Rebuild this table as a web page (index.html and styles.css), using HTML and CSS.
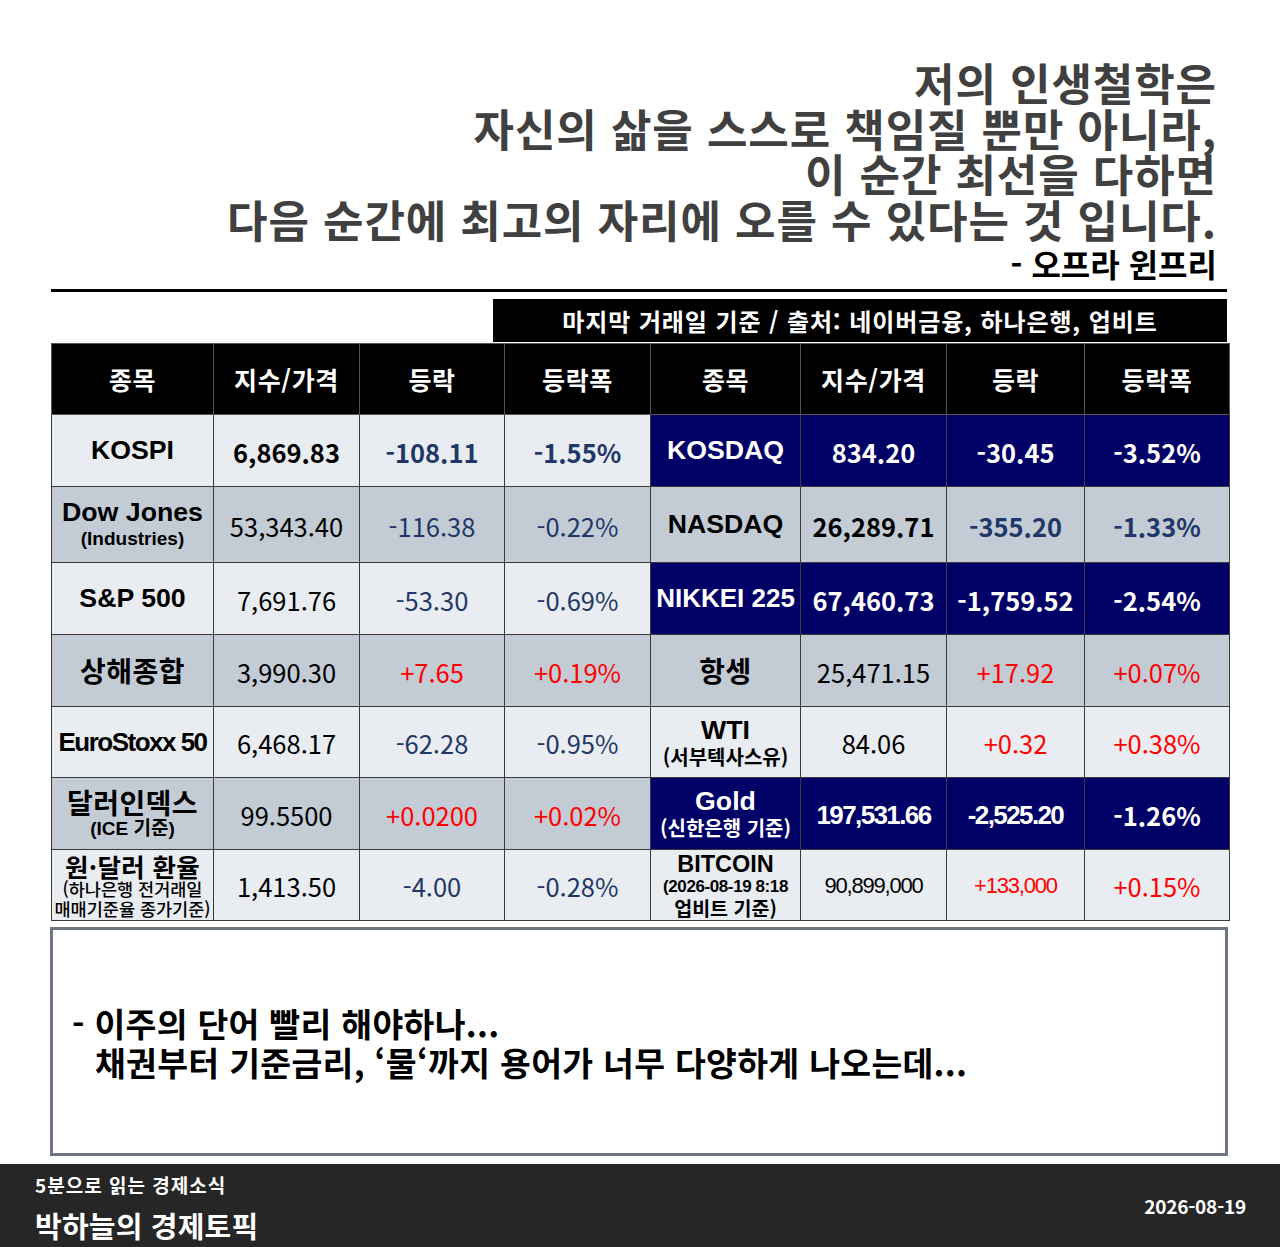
FILE: index.html
```html
<!DOCTYPE html>
<html lang="ko">
<head>
<meta charset="utf-8">
<title>박하늘의 경제토픽</title>
<link rel="stylesheet" href="styles.css">
</head>
<body>
<div class="page">
  <section class="quote">
    <p class="quote-text">저의 인생철학은<br>자신의 삶을 스스로 책임질 뿐만 아니라,<br>이 순간 최선을 다하면<br>다음 순간에 최고의 자리에 오를 수 있다는 것 입니다.</p>
    <p class="quote-author">- 오프라 윈프리</p>
  </section>
  <div class="rule"></div>
  <div class="source-row"><div class="source">마지막 거래일 기준 / 출처: 네이버금융, 하나은행, 업비트</div></div>
  <table class="market">
    <colgroup>
      <col class="c1"><col class="c2"><col class="c3"><col class="c4">
      <col class="c5"><col class="c6"><col class="c7"><col class="c8">
    </colgroup>
    <thead>
      <tr class="h-row">
        <th>종목</th><th>지수/가격</th><th>등락</th><th>등락폭</th>
        <th>종목</th><th>지수/가격</th><th>등락</th><th>등락폭</th>
      </tr>
    </thead>
    <tbody>
      <tr class="light r1">
        <td class="name">KOSPI</td>
        <td class="val b">6,869.83</td>
        <td class="val b dn">-108.11</td>
        <td class="val b dn">-1.55%</td>
        <td class="name navy">KOSDAQ</td>
        <td class="val b navy">834.20</td>
        <td class="val b navy">-30.45</td>
        <td class="val b navy">-3.52%</td>
      </tr>
      <tr class="grey r2">
        <td class="name"><span class="main">Dow Jones</span><span class="sub">(Industries)</span></td>
        <td class="val">53,343.40</td>
        <td class="val dn">-116.38</td>
        <td class="val dn">-0.22%</td>
        <td class="name">NASDAQ</td>
        <td class="val b">26,289.71</td>
        <td class="val b dn">-355.20</td>
        <td class="val b dn">-1.33%</td>
      </tr>
      <tr class="light r3">
        <td class="name">S&amp;P 500</td>
        <td class="val">7,691.76</td>
        <td class="val dn">-53.30</td>
        <td class="val dn">-0.69%</td>
        <td class="name navy tight">NIKKEI 225</td>
        <td class="val b navy">67,460.73</td>
        <td class="val b navy">-1,759.52</td>
        <td class="val b navy">-2.54%</td>
      </tr>
      <tr class="grey r4">
        <td class="name ko">상해종합</td>
        <td class="val">3,990.30</td>
        <td class="val up">+7.65</td>
        <td class="val up">+0.19%</td>
        <td class="name ko">항셍</td>
        <td class="val">25,471.15</td>
        <td class="val up">+17.92</td>
        <td class="val up">+0.07%</td>
      </tr>
      <tr class="light r5">
        <td class="name narrow">EuroStoxx 50</td>
        <td class="val">6,468.17</td>
        <td class="val dn">-62.28</td>
        <td class="val dn">-0.95%</td>
        <td class="name"><span class="main">WTI</span><span class="sub ko-sub">(서부텍사스유)</span></td>
        <td class="val">84.06</td>
        <td class="val up">+0.32</td>
        <td class="val up">+0.38%</td>
      </tr>
      <tr class="grey r6">
        <td class="name"><span class="main ko dx">달러인덱스</span><span class="sub">(ICE 기준)</span></td>
        <td class="val">99.5500</td>
        <td class="val up">+0.0200</td>
        <td class="val up">+0.02%</td>
        <td class="name navy"><span class="main">Gold</span><span class="sub gold-sub">(신한은행 기준)</span></td>
        <td class="val navy nb">197,531.66</td>
        <td class="val navy nb">-2,525.20</td>
        <td class="val b navy">-1.26%</td>
      </tr>
      <tr class="light r7">
        <td class="name"><span class="main ko fx">원·달러 환율</span><span class="tiny">(하나은행 전거래일</span><span class="tiny">매매기준율 종가기준)</span></td>
        <td class="val">1,413.50</td>
        <td class="val dn">-4.00</td>
        <td class="val dn">-0.28%</td>
        <td class="name"><span class="main btc">BITCOIN</span><span class="tiny b2">(2026-08-19 8:18</span><span class="sub b3">업비트 기준)</span></td>
        <td class="val nr">90,899,000</td>
        <td class="val up nr">+133,000</td>
        <td class="val up">+0.15%</td>
      </tr>
    </tbody>
  </table>
  <section class="note">
    <div class="note-text">
      <p class="note-line">- 이주의 단어 빨리 해야하나...</p>
      <p class="note-line indent">채권부터 기준금리, ‘물‘까지 용어가 너무 다양하게 나오는데...</p>
    </div>
  </section>
  <footer class="footer">
    <div class="brand">
      <div class="brand-sub">5분으로 읽는 경제소식</div>
      <div class="brand-main">박하늘의 경제토픽</div>
    </div>
    <div class="date">2026-08-19</div>
  </footer>
</div>
</body>
</html>
```
FILE: styles.css
```css
* { box-sizing: border-box; }
html, body { margin: 0; padding: 0; background: #ffffff; }
body { font-family: "Noto Sans CJK KR", "Noto Sans", sans-serif; color: #000; }
.page { width: 1280px; height: 1247px; display: flex; flex-direction: column; }

.quote { padding: 60px 63px 0 0; text-align: right; }
.quote p { margin: 0; }
.quote-text { font-size: 44px; line-height: 45.5px; font-weight: 700; color: #404040; letter-spacing: 0.9px; }
.quote-author { font-size: 32px; line-height: 40px; font-weight: 700; color: #000; margin-top: 1px !important; }

.rule { margin: 6px 53px 0 51px; height: 3px; background: #000; }

.source-row { display: flex; justify-content: flex-end; padding: 7px 53px 0 0; }
.source { width: 734px; height: 43px; background: #000; color: #fff; font-size: 24px; font-weight: 700;
  display: flex; align-items: center; justify-content: center; letter-spacing: 0.9px; }

.market { margin: 1px 0 0 51px; width: 1178px; border-collapse: collapse; table-layout: fixed; }
.c1 { width: 162px; } .c2 { width: 146px; } .c3 { width: 145px; } .c4 { width: 146px; }
.c5 { width: 150px; } .c6 { width: 146px; } .c7 { width: 138px; } .c8 { width: 145px; }
.market th, .market td { border: 1px solid #3a3a3a; padding: 0; text-align: center; vertical-align: middle; }
.market th { background: #000; color: #fff; font-size: 25px; font-weight: 700; height: 71px; border-color: #555; letter-spacing: 0.6px; }
.h-row { height: 71px; }
.r1 { height: 72px; } .r2 { height: 76px; } .r3 { height: 72px; } .r4 { height: 72px; }
.r5 { height: 71px; } .r6 { height: 72px; } .r7 { height: 71px; }
.light td { background: #e9edf1; }
.grey td { background: #c3cbd5; }
.market td.navy { background: #000066; color: #fff; }

.name { font-family: "Liberation Sans", "Noto Sans CJK KR", sans-serif; font-weight: 700; font-size: 26.7px; line-height: 1.1; }
.name span { display: block; }
.name.ko, .main.ko { font-family: "Noto Sans CJK KR", sans-serif; font-size: 28px; line-height: 1.2; letter-spacing: 0.5px; }
.main.ko.dx { font-size: 28px; line-height: 32px; letter-spacing: 0.4px; }
.name.tight { font-size: 26px; letter-spacing: 0; }
.name.narrow { font-size: 26px; letter-spacing: -1.5px; }
.sub { font-size: 19px; line-height: 1.2; font-family: "Liberation Sans", "Noto Sans CJK KR", sans-serif; }
.ko-sub { font-size: 20px; line-height: 23px; font-family: "Noto Sans CJK KR", sans-serif; }
.gold-sub { font-size: 20px; line-height: 24px; font-family: "Noto Sans CJK KR", sans-serif; }
.tiny { font-family: "Noto Sans CJK KR", sans-serif; font-weight: 500; font-size: 17.5px; line-height: 20px; letter-spacing: 0; white-space: nowrap; }
.main.fx { font-size: 25.5px; line-height: 27px; letter-spacing: 0.3px; }
.main.btc { font-size: 23.5px; line-height: 24px; }
.tiny.b2 { font-family: "Liberation Sans", sans-serif; font-weight: 700; font-size: 17px; letter-spacing: -0.4px; line-height: 21px; }
.sub.b3 { font-family: "Noto Sans CJK KR", sans-serif; font-size: 19.5px; line-height: 22px; }

.val { font-family: "Noto Sans CJK KR", sans-serif; font-size: 25.5px; font-weight: 400; line-height: 1; padding-top: 2px !important; }
.val.b { font-weight: 700; }
.val.dn { color: #1f3868; }
.val.up { color: #ff0000; }
.market td.val.navy { color: #fff; }
.val.nb { font-family: "Liberation Sans", sans-serif; font-weight: 700; font-size: 26px; letter-spacing: -1.6px; }
.val.nr { font-family: "Liberation Sans", sans-serif; font-weight: 400; font-size: 22px; letter-spacing: -1.2px; }

.note { margin: 6px 52px 0 50px; height: 229px; border: 3px solid #6f7683; display: flex; align-items: center; padding-left: 19px; }
.note-text { font-size: 33.5px; line-height: 39px; font-weight: 700; color: #000; white-space: nowrap; letter-spacing: 0.3px; }
.note-line { margin: 0; }
.note-line.indent { padding-left: 23px; }

.footer { margin-top: 8px; flex: 1; background: #262626; color: #fff; display: flex; justify-content: space-between; align-items: center; padding: 0 34px 0 35px; }
.brand { display: flex; flex-direction: column; gap: 11px; padding-top: 3px; }
.brand-sub { font-size: 19px; font-weight: 700; line-height: 24px; letter-spacing: 1px; }
.brand-main { font-size: 29px; font-weight: 700; line-height: 34px; letter-spacing: 0.2px; }
.date { font-size: 19px; font-weight: 700; letter-spacing: -0.2px; padding-top: 0; }
```
